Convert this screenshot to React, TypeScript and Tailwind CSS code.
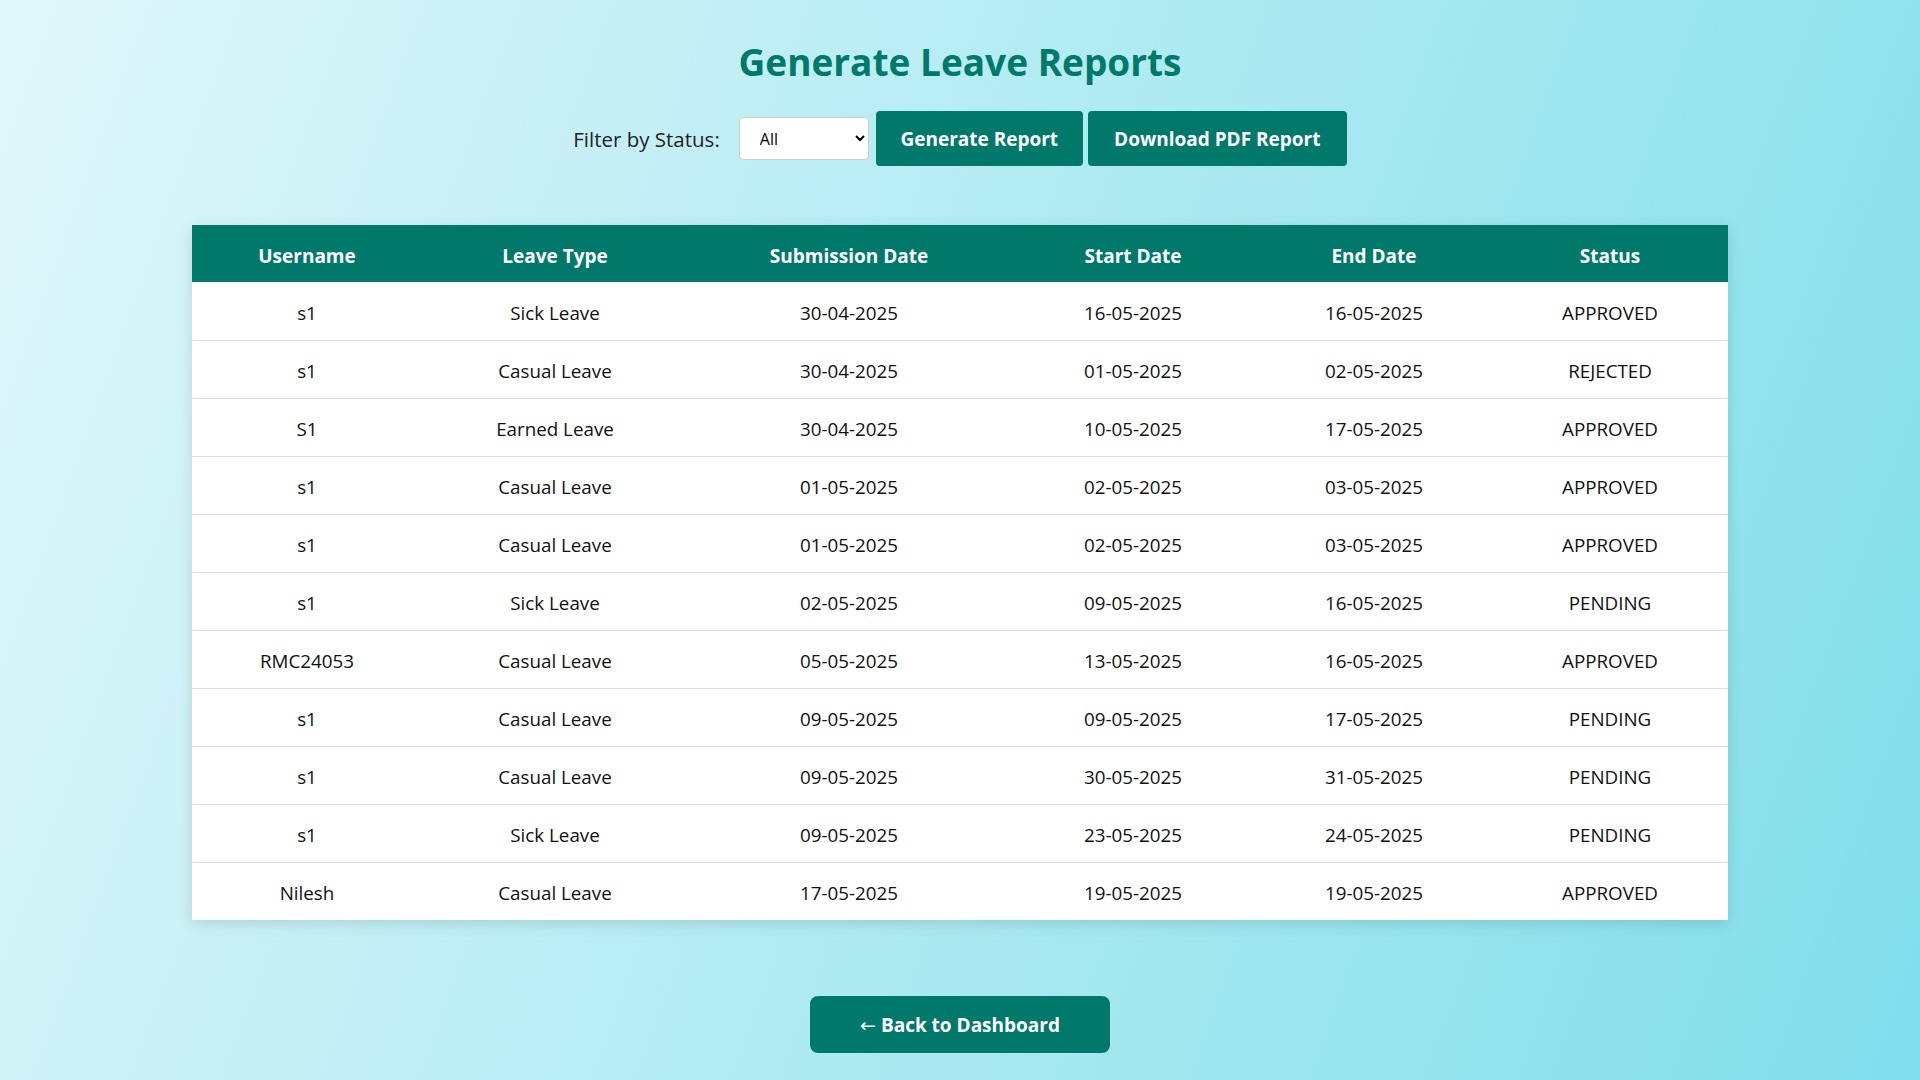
import { useState } from "react";

type Leave = {
  username: string;
  type: string;
  submitted: string;
  start: string;
  end: string;
  status: string;
};

const leaves: Leave[] = [
  { username: "s1", type: "Sick Leave", submitted: "30-04-2025", start: "16-05-2025", end: "16-05-2025", status: "APPROVED" },
  { username: "s1", type: "Casual Leave", submitted: "30-04-2025", start: "01-05-2025", end: "02-05-2025", status: "REJECTED" },
  { username: "S1", type: "Earned Leave", submitted: "30-04-2025", start: "10-05-2025", end: "17-05-2025", status: "APPROVED" },
  { username: "s1", type: "Casual Leave", submitted: "01-05-2025", start: "02-05-2025", end: "03-05-2025", status: "APPROVED" },
  { username: "s1", type: "Casual Leave", submitted: "01-05-2025", start: "02-05-2025", end: "03-05-2025", status: "APPROVED" },
  { username: "s1", type: "Sick Leave", submitted: "02-05-2025", start: "09-05-2025", end: "16-05-2025", status: "PENDING" },
  { username: "RMC24053", type: "Casual Leave", submitted: "05-05-2025", start: "13-05-2025", end: "16-05-2025", status: "APPROVED" },
  { username: "s1", type: "Casual Leave", submitted: "09-05-2025", start: "09-05-2025", end: "17-05-2025", status: "PENDING" },
  { username: "s1", type: "Casual Leave", submitted: "09-05-2025", start: "30-05-2025", end: "31-05-2025", status: "PENDING" },
  { username: "s1", type: "Sick Leave", submitted: "09-05-2025", start: "23-05-2025", end: "24-05-2025", status: "PENDING" },
  { username: "Nilesh", type: "Casual Leave", submitted: "17-05-2025", start: "19-05-2025", end: "19-05-2025", status: "APPROVED" },
];

const headers = ["Username", "Leave Type", "Submission Date", "Start Date", "End Date", "Status"];
const colWidths = ["w-[230px]", "w-[266px]", "w-[322px]", "w-[246px]", "w-[236px]", "w-[236px]"];

export default function App() {
  const [status, setStatus] = useState("All");

  const rows = status === "All" ? leaves : leaves.filter((l) => l.status === status.toUpperCase());

  return (
    <div className="min-h-screen bg-[linear-gradient(110deg,#e0f7fa_0%,#80deea_100%)] pt-[40px] font-['Open_Sans',sans-serif] text-[#111]">
      <h2 className="text-center text-[37px] leading-[44px] font-bold text-[#00796b]">
        Generate Leave Reports
      </h2>

      <div className="mt-[27px] flex items-center justify-center">
        <label className="mr-[19px] pt-[2px] text-[20.5px] text-[#222]">Filter by Status:</label>
        <select
          value={status}
          onChange={(e) => setStatus(e.target.value)}
          className="mr-[7px] h-[43px] w-[130px] rounded-[4px] border border-[#ccc] bg-white px-4 text-[16px] text-black"
        >
          <option>All</option>
          <option>Approved</option>
          <option>Pending</option>
          <option>Rejected</option>
        </select>
        <button
          type="button"
          className="mr-[5px] h-[55px] w-[207px] rounded-[4px] bg-[#00796b] pt-[2px] text-[19px] font-bold text-white"
        >
          Generate Report
        </button>
        <button
          type="button"
          className="h-[55px] w-[259px] rounded-[4px] bg-[#00796b] pt-[2px] text-[19px] font-bold text-white"
        >
          Download PDF Report
        </button>
      </div>

      <div className="mx-auto mt-[59px] w-[1536px] bg-white shadow-[0_4px_14px_rgba(0,0,0,0.12)]">
        <table className="w-full table-fixed border-collapse text-center">
          <thead>
            <tr className="bg-[#00796b] text-white">
              {headers.map((h, i) => (
                <th key={h} className={`${colWidths[i]} h-[57px] pt-[5px] text-[19px] leading-[25px] font-bold`}>
                  {h}
                </th>
              ))}
            </tr>
          </thead>
          <tbody>
            {rows.map((r, i) => (
              <tr key={i} className="border-t border-[#ddd] first:border-t-0">
                <td className="h-[58px] pt-[5px] text-[18.8px] leading-[25px]">{r.username}</td>
                <td className="h-[58px] pt-[5px] text-[18.8px] leading-[25px]">{r.type}</td>
                <td className="h-[58px] pt-[5px] text-[18.8px] leading-[25px]">{r.submitted}</td>
                <td className="h-[58px] pt-[5px] text-[18.8px] leading-[25px]">{r.start}</td>
                <td className="h-[58px] pt-[5px] text-[18.8px] leading-[25px]">{r.end}</td>
                <td className="h-[58px] pt-[5px] text-[18.8px] leading-[25px]">{r.status}</td>
              </tr>
            ))}
          </tbody>
        </table>
      </div>

      <div className="mt-[76px] flex justify-center pb-6">
        <button
          type="button"
          className="h-[57px] w-[300px] rounded-[8px] bg-[#00796b] pt-[2px] text-[19px] font-bold text-white"
        >
          <span className="font-['DejaVu_Sans',sans-serif] font-normal">←</span> Back to Dashboard
        </button>
      </div>
    </div>
  );
}
